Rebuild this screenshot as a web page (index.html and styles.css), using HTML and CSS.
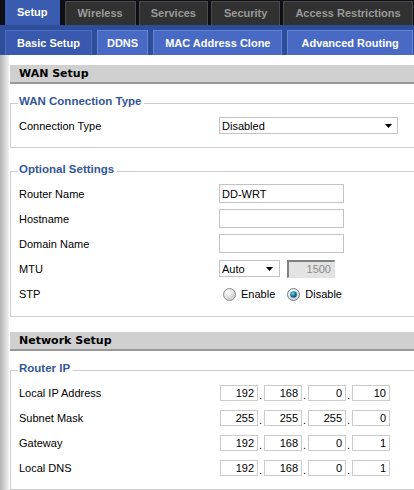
FILE: index.html
```html
<!DOCTYPE html>
<html>
<head>
<meta charset="utf-8">
<title>Basic Setup</title>
<link rel="stylesheet" href="styles.css">
</head>
<body>
<div class="page">
  <nav class="mainnav">
    <span class="tab active">Setup</span>
    <span class="tab">Wireless</span>
    <span class="tab">Services</span>
    <span class="tab">Security</span>
    <span class="tab">Access Restrictions</span>
  </nav>
  <nav class="subnav">
    <span class="subtab active">Basic Setup</span>
    <span class="subtab">DDNS</span>
    <span class="subtab">MAC Address Clone</span>
    <span class="subtab">Advanced Routing</span>
  </nav>
  <div class="main">
    <div class="strip"></div>
    <div class="content">
      <h2 class="section">WAN Setup</h2>
      <fieldset>
        <legend>WAN Connection Type</legend>
        <div class="row">
          <span class="label">Connection Type</span>
          <div class="select select-wide"><span>Disabled</span><svg class="arrow" width="7" height="4" viewBox="0 0 7 4"><polygon points="0,0 7,0 3.5,4" fill="#000"/></svg></div>
        </div>
      </fieldset>

      <fieldset class="fs-gap">
        <legend>Optional Settings</legend>
        <div class="row">
          <span class="label">Router Name</span>
          <input class="text" type="text" value="DD-WRT">
        </div>
        <div class="row">
          <span class="label">Hostname</span>
          <input class="text" type="text" value="">
        </div>
        <div class="row">
          <span class="label">Domain Name</span>
          <input class="text" type="text" value="">
        </div>
        <div class="row">
          <span class="label">MTU</span>
          <div class="select select-small"><span>Auto</span><svg class="arrow" width="7" height="4" viewBox="0 0 7 4"><polygon points="0,0 7,0 3.5,4" fill="#000"/></svg></div>
          <input class="mtu" type="text" value="1500" disabled>
        </div>
        <div class="row row-stp">
          <span class="label">STP</span>
          <span class="radio">
            <svg width="13" height="13" viewBox="0 0 13 13">
              <defs>
                <radialGradient id="rg1" cx="35%" cy="30%" r="75%">
                  <stop offset="0" stop-color="#ffffff"/>
                  <stop offset="1" stop-color="#c9c9c9"/>
                </radialGradient>
              </defs>
              <circle cx="6.5" cy="6.5" r="6" fill="url(#rg1)" stroke="#8e8e8e"/>
            </svg>
            <span>Enable</span>
          </span>
          <span class="radio">
            <svg width="13" height="13" viewBox="0 0 13 13">
              <defs>
                <radialGradient id="rg2" cx="35%" cy="30%" r="75%">
                  <stop offset="0" stop-color="#ffffff"/>
                  <stop offset="1" stop-color="#cfcfcf"/>
                </radialGradient>
                <radialGradient id="rg3" cx="40%" cy="35%" r="70%">
                  <stop offset="0" stop-color="#7fd3f0"/>
                  <stop offset="0.5" stop-color="#1f7fa8"/>
                  <stop offset="1" stop-color="#0a3f5c"/>
                </radialGradient>
              </defs>
              <circle cx="6.5" cy="6.5" r="6" fill="url(#rg2)" stroke="#6e8294"/>
              <circle cx="6.5" cy="6.5" r="3.3" fill="url(#rg3)"/>
            </svg>
            <span>Disable</span>
          </span>
        </div>
      </fieldset>

      <h2 class="section section-gap">Network Setup</h2>
      <fieldset>
        <legend>Router IP</legend>
        <div class="row">
          <span class="label">Local IP Address</span>
          <div class="ip"><input type="text" value="192"><span class="dot">.</span><input type="text" value="168"><span class="dot">.</span><input type="text" value="0"><span class="dot">.</span><input type="text" value="10"></div>
        </div>
        <div class="row">
          <span class="label">Subnet Mask</span>
          <div class="ip"><input type="text" value="255"><span class="dot">.</span><input type="text" value="255"><span class="dot">.</span><input type="text" value="255"><span class="dot">.</span><input type="text" value="0"></div>
        </div>
        <div class="row">
          <span class="label">Gateway</span>
          <div class="ip"><input type="text" value="192"><span class="dot">.</span><input type="text" value="168"><span class="dot">.</span><input type="text" value="0"><span class="dot">.</span><input type="text" value="1"></div>
        </div>
        <div class="row">
          <span class="label">Local DNS</span>
          <div class="ip"><input type="text" value="192"><span class="dot">.</span><input type="text" value="168"><span class="dot">.</span><input type="text" value="0"><span class="dot">.</span><input type="text" value="1"></div>
        </div>
      </fieldset>
    </div>
  </div>
</div>
</body>
</html>
```

FILE: styles.css
```css
html, body {
  margin: 0;
  padding: 0;
  overflow: hidden;
  background: #ffffff;
}
body {
  font-family: "Liberation Sans", Arial, sans-serif;
  font-size: 11px;
  color: #000000;
}
.page {
  width: 440px;
}

/* main navigation */
.mainnav {
  display: flex;
  align-items: flex-end;
  height: 25px;
  background: #0e0e14;
  padding-left: 5px;
  gap: 3px;
}
.tab {
  box-sizing: border-box;
  height: 24px;
  padding: 0 11px 2px;
  display: flex;
  align-items: center;
  font-weight: bold;
  font-size: 11px;
  color: #9a9a9a;
  background: #313131;
  border: 1px solid #4b4b4b;
  border-bottom: none;
  white-space: nowrap;
}
.tab:nth-child(2) {
  padding: 0 12px 2px;
}
.tab:nth-child(4) {
  padding: 0 12px 2px;
}
.tab.active {
  height: 25px;
  padding: 0 11px 3px;
  margin-right: 2px;
  color: #ffffff;
  background: #3a5cb0;
  border-color: #3a5cb0;
}

/* sub navigation */
.subnav {
  display: flex;
  align-items: flex-end;
  height: 30px;
  background: #2e4e9c;
  padding-left: 5px;
  gap: 5px;
}
.subtab {
  box-sizing: border-box;
  height: 25px;
  padding: 0 11px 1px;
  display: flex;
  align-items: center;
  font-weight: bold;
  font-size: 11px;
  color: #ffffff;
  background: #4869c4;
  border: 1px solid #6383d3;
  border-bottom: none;
  white-space: nowrap;
}
.subtab:nth-child(2) {
  padding: 0 9px 1px;
}
.subtab:last-child {
  padding: 0 13px 1px;
}
.subtab.active {
  background: #3859ad;
  border-color: #4c6ec2;
}

/* body */
.main {
  display: flex;
}
.strip {
  width: 9px;
  flex: none;
  background: linear-gradient(to right, #b4b4b4, #e4e4e4 80%, #f2f2f2);
}
.content {
  flex: 1;
  padding: 10px 0 30px 1px;
}
.section {
  margin: 0;
  box-sizing: border-box;
  height: 19px;
  padding-left: 9px;
  background: #d0d0d0;
  border-bottom: 2px solid #989898;
  font-family: "DejaVu Sans", Verdana, sans-serif;
  font-size: 11px;
  font-weight: bold;
  line-height: 17px;
  color: #000000;
}
.section-gap {
  margin-top: 15px;
}

fieldset {
  margin: 10px 0 0 0;
  border: 1px solid #cdcdcd;
  padding: 0 0 9px 7px;
}
.fs-gap {
  margin-top: 14px;
}
legend {
  padding: 0 3px 5px 1px;
  font-weight: bold;
  font-size: 11.5px;
  line-height: 14px;
  color: #34569a;
}

.row {
  display: flex;
  align-items: center;
  height: 25px;
  padding-left: 1px;
}
.row-stp {
  height: 26px;
}
.label {
  width: 200px;
  flex: none;
}

/* fake select */
.select {
  box-sizing: border-box;
  height: 17px;
  display: flex;
  align-items: center;
  justify-content: space-between;
  padding: 0 5px 0 2px;
  border: 1px solid #c3c3c3;
  background: #ffffff;
}
.select-wide {
  width: 179px;
}
.select-small {
  width: 61px;
  padding-right: 6px;
}
.arrow {
  display: block;
  margin-top: 1px;
}

input {
  font-family: "Liberation Sans", Arial, sans-serif;
  font-size: 11px;
  color: #000000;
  margin: 0;
  outline: none;
}
.text {
  box-sizing: border-box;
  width: 125px;
  height: 19px;
  padding: 0 2px;
  border: 1px solid #c3c3c3;
  background: #ffffff;
}
.mtu {
  box-sizing: border-box;
  width: 48px;
  height: 18px;
  margin-left: 7px;
  padding: 0 3px 0 0;
  text-align: right;
  border-style: solid;
  border-width: 2px 1px 1px 2px;
  border-color: #808080 #e0e0e0 #e0e0e0 #808080;
  background: #e3e3e3;
  color: #8a8a8a;
}
.mtu:disabled {
  color: #8a8a8a;
  background: #e3e3e3;
}

.radio {
  display: flex;
  align-items: center;
  gap: 5px;
  margin-left: 4px;
  margin-right: 8px;
}
.radio svg {
  display: block;
}

.ip {
  display: flex;
  align-items: flex-end;
  margin-left: 1px;
}
.ip input {
  box-sizing: border-box;
  width: 38px;
  height: 16px;
  padding: 0 3px 0 0;
  text-align: right;
  border: 1px solid #cccccc;
  background: #ffffff;
}
.dot {
  width: 6px;
  padding-left: 1px;
  box-sizing: border-box;
  line-height: 12px;
}
```
